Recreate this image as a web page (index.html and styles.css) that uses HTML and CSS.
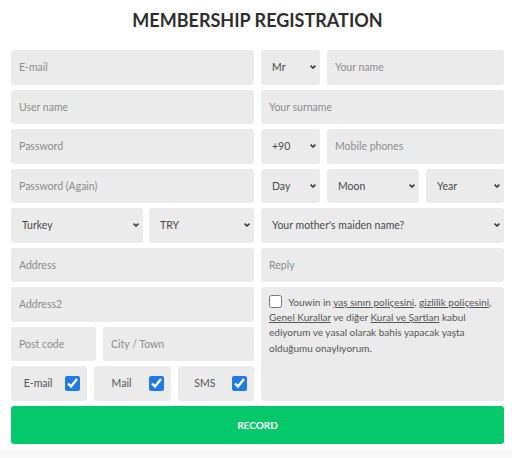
FILE: index.html
```html
<!DOCTYPE html>
<html lang="en">
<head>
<meta charset="utf-8">
<title>Membership Registration</title>
<link rel="stylesheet" href="styles.css">
</head>
<body>
<main class="page">
  <h1 class="title">MEMBERSHIP REGISTRATION</h1>
  <form class="form">
    <div class="grid">
      <input class="field" placeholder="E-mail">
      <div class="split">
        <div class="field select w59"><span>Mr</span><svg class="chev" viewBox="0 0 6 4"><path d="M0.6 0.6 L3 3 L5.4 0.6" /></svg></div>
        <input class="field grow" placeholder="Your name">
      </div>

      <input class="field" placeholder="User name">
      <input class="field" placeholder="Your surname">

      <input class="field" type="password" placeholder="Password">
      <div class="split">
        <div class="field select w59"><span>+90</span><svg class="chev" viewBox="0 0 6 4"><path d="M0.6 0.6 L3 3 L5.4 0.6" /></svg></div>
        <input class="field grow" placeholder="Mobile phones">
      </div>

      <input class="field" type="password" placeholder="Password (Again)">
      <div class="split">
        <div class="field select w59"><span>Day</span><svg class="chev" viewBox="0 0 6 4"><path d="M0.6 0.6 L3 3 L5.4 0.6" /></svg></div>
        <div class="field select w92"><span>Moon</span><svg class="chev" viewBox="0 0 6 4"><path d="M0.6 0.6 L3 3 L5.4 0.6" /></svg></div>
        <div class="field select grow"><span>Year</span><svg class="chev" viewBox="0 0 6 4"><path d="M0.6 0.6 L3 3 L5.4 0.6" /></svg></div>
      </div>

      <div class="split gap6">
        <div class="field select w132"><span>Turkey</span><svg class="chev" viewBox="0 0 6 4"><path d="M0.6 0.6 L3 3 L5.4 0.6" /></svg></div>
        <div class="field select grow"><span>TRY</span><svg class="chev" viewBox="0 0 6 4"><path d="M0.6 0.6 L3 3 L5.4 0.6" /></svg></div>
      </div>
      <div class="field select"><span>Your mother's maiden name?</span><svg class="chev" viewBox="0 0 6 4"><path d="M0.6 0.6 L3 3 L5.4 0.6" /></svg></div>

      <input class="field" placeholder="Address">
      <input class="field" placeholder="Reply">

      <input class="field" placeholder="Address2">
      <div class="agree">
        <p><input type="checkbox" class="agree-box"> Youwin in <a>yaş sınırı poliçesini</a>, <a>gizlilik poliçesini</a>, <a>Genel Kurallar</a> ve diğer <a>Kural ve Şartları</a> kabul ediyorum ve yasal olarak bahis yapacak yaşta olduğumu onaylıyorum.</p>
      </div>

      <div class="split">
        <input class="field w85" placeholder="Post code">
        <input class="field grow" placeholder="City / Town">
      </div>

      <div class="split">
        <label class="field opt"><span>E-mail</span><input type="checkbox" class="opt-box" checked></label>
        <label class="field opt"><span>Mail</span><input type="checkbox" class="opt-box" checked></label>
        <label class="field opt"><span>SMS</span><input type="checkbox" class="opt-box" checked></label>
      </div>
    </div>
    <button type="button" class="record">RECORD</button>
  </form>
</main>
<div class="foot"></div>
</body>
</html>
```

FILE: styles.css
```css
html, body {
  margin: 0;
  padding: 0;
  background: #ffffff;
}
body {
  font-family: Lato, "Open Sans", sans-serif;
  color: #444;
}
.page {
  background: #fff;
  height: 449px;
  padding: 0 8px 0 11px;
  box-sizing: border-box;
}
.foot {
  height: 9px;
  background: #f8f8f8;
}
.title {
  margin: 0;
  height: 50px;
  padding-top: 9px;
  box-sizing: border-box;
  text-align: center;
  font-size: 18px;
  font-weight: 700;
  color: #2e2e2e;
  line-height: 22px;
}
.form {
  width: 493px;
}
.grid {
  display: grid;
  grid-template-columns: 243px 243px;
  grid-auto-rows: 34.5px;
  column-gap: 7px;
  row-gap: 5px;
}
.split {
  display: flex;
  gap: 7px;
  min-width: 0;
}
.split.gap6 { gap: 6px; }
.field {
  box-sizing: border-box;
  height: 34.5px;
  width: 100%;
  min-width: 0;
  margin: 0;
  border: none;
  outline: none;
  border-radius: 3px;
  background: #ebebeb;
  font-family: inherit;
  font-size: 10.5px;
  color: #444;
  padding: 0 8px;
}
.field::placeholder {
  color: #8c8c8c;
  opacity: 1;
}
.split .field { width: auto; }
.grow { flex: 1 1 0; min-width: 0; }
.w59 { flex: 0 0 59px; }
.w92 { flex: 0 0 92px; }
.w132 { flex: 0 0 132px; }
.w85 { flex: 0 0 85px; }
.select {
  display: flex;
  align-items: center;
  justify-content: space-between;
  padding: 0 4px 0 11px;
  color: #4a4a4a;
}
.chev {
  width: 6px;
  height: 4px;
  fill: none;
  stroke: #3a3a3a;
  stroke-width: 1.6;
}
.agree {
  grid-row: span 3;
  background: #ebebeb;
  border-radius: 3px;
  padding: 8px 8px;
  box-sizing: border-box;
}
.agree p {
  margin: 0;
  font-size: 10px;
  line-height: 15.2px;
  color: #555;
}
.agree a {
  text-decoration: underline;
  color: #555;
}
.agree-box {
  width: 13px;
  height: 13px;
  margin: -3px 4px -3px 0;
  vertical-align: -2px;
}
.opt {
  flex: 1 1 0;
  display: flex;
  align-items: center;
  padding: 0 7px 0 0;
  font-size: 10.5px;
  color: #555;
}
.opt span {
  flex: 1;
  text-align: center;
}
.opt-box {
  width: 15px;
  height: 15px;
  margin: 0;
  accent-color: #1f7ae8;
}
.record {
  display: block;
  width: 493px;
  height: 38px;
  margin-top: 5px;
  border: none;
  border-radius: 3px;
  background: #05c86b;
  color: #fff;
  font-family: inherit;
  font-weight: 700;
  font-size: 10px;
}
```
